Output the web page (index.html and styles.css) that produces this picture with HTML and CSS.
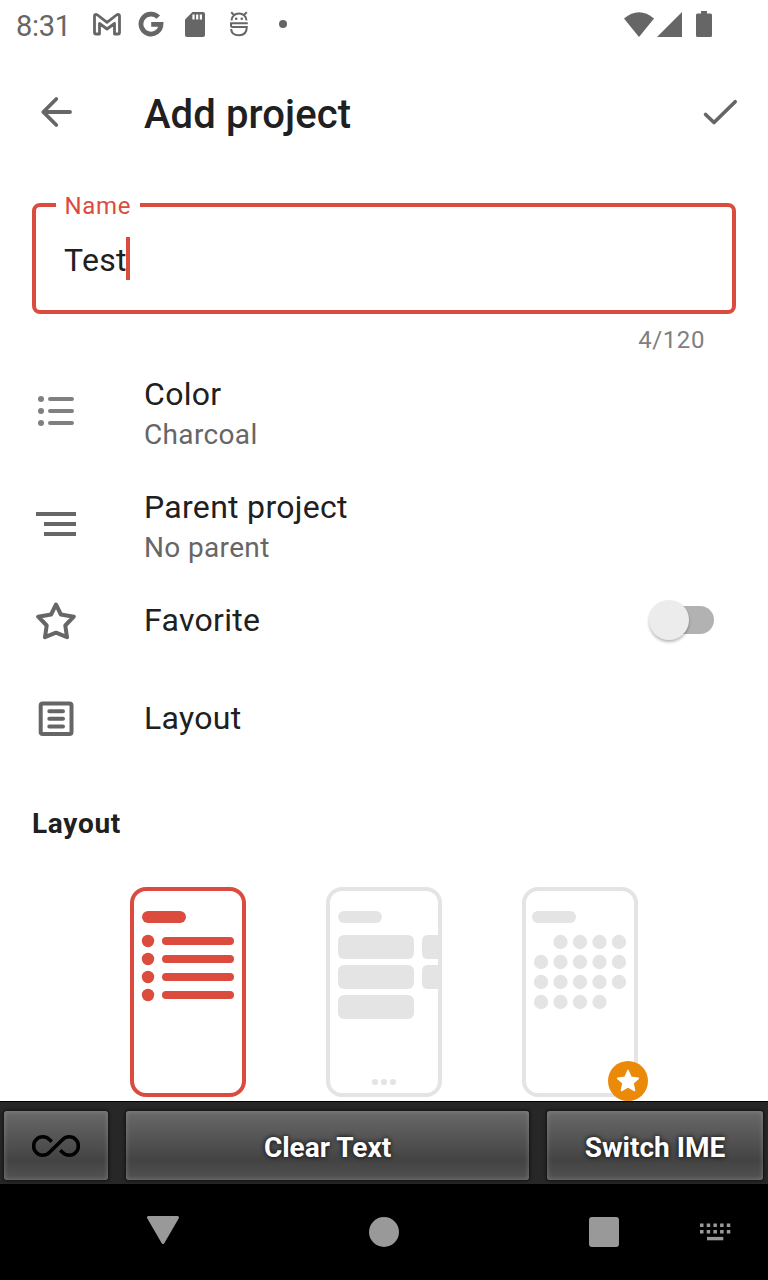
FILE: index.html
```html
<!DOCTYPE html>
<html lang="en">
<head>
<meta charset="utf-8">
<title>Add project</title>
<link rel="stylesheet" href="styles.css">
</head>
<body>
<div class="screen">
  <div class="status">
    <span class="clock">8:31</span>
    <svg class="s-mail" width="28" height="23" viewBox="0 0 28 23"><path d="M1.500 3.200Q1.500 1.500 3.300 1.500L4.500 2 14 9.300 23.500 2 24.700 1.500Q26.500 1.500 26.500 3.200V19.500Q26.500 21 25 21H21.500V10.500L14 16 6.500 10.500V21H3Q1.500 21 1.500 19.500Z" fill="none" stroke="#666" stroke-width="2.800" stroke-linejoin="round"/></svg>
    <svg class="s-g" width="26" height="26" viewBox="0 0 26 26"><path d="M20.300 6.200A10 10 0 1 0 23 13.300H13.200" fill="none" stroke="#666" stroke-width="4.800"/></svg>
    <svg class="s-sd" width="20" height="25" viewBox="0 0 20 25"><path d="M7.500 0H18Q20 0 20 2V23Q20 25 18 25H2Q0 25 0 23V7.500Z" fill="#666"/><path d="M8.500 2.500V7.500M12.200 2.500V7.500M15.900 2.500V7.500" stroke="#fff" stroke-width="2.200"/></svg>
    <svg class="s-bug" width="20" height="26" viewBox="0 0 20 26"><path d="M2.500 9.500A7.500 7 0 0 1 17.500 9.500M2.200 1.200L4.800 3.800M17.800 1.200L15.200 3.800M18.800 12.200H2V14.500Q2 16 3.600 16H17.800Q17.800 24.300 10 24.300 2.200 24.300 2.200 18" fill="none" stroke="#666" stroke-width="2"/><circle cx="7.200" cy="7.800" r="1.300" fill="#666"/><circle cx="12.800" cy="7.800" r="1.300" fill="#666"/></svg>
    <span class="s-dot"></span>
    <svg class="s-wifi" width="30" height="25" viewBox="0 0 30 25"><path d="M0 6.500Q15-6.200 30 6.500L15 25Z" fill="#666"/></svg>
    <svg class="s-cell" width="25" height="25" viewBox="0 0 25 25"><path d="M25 0V25H0Z" fill="#666"/></svg>
    <svg class="s-bat" width="16" height="26" viewBox="0 0 16 26"><path d="M5 0H11V2.500H14.500Q16 2.500 16 4V24.500Q16 26 14.500 26H1.500Q0 26 0 24.500V4Q0 2.500 1.500 2.500H5Z" fill="#666"/></svg>
  </div>

  <header class="appbar">
    <svg width="34" height="34" viewBox="0 0 34 34"><path d="M17.300 4L4.300 17 17.300 30M4.300 17H31" fill="none" stroke="#666" stroke-width="3.800" stroke-linecap="round" stroke-linejoin="round"/></svg>
    <h1 class="title">Add project</h1>
    <svg width="36" height="28" viewBox="0 0 36 28"><path d="M3.600 16.500L12 24.500 33.200 3.800" fill="none" stroke="#666" stroke-width="3.700" stroke-linecap="round" stroke-linejoin="round"/></svg>
  </header>

  <div class="field">
    <span class="label">Name</span>
    <span class="value">Test</span><span class="caret"></span>
  </div>
  <div class="counter">4/120</div>

  <div class="row">
    <svg class="icon" width="40" height="40" viewBox="0 0 40 40"><g fill="#808080"><circle cx="5" cy="8" r="3"/><circle cx="5" cy="20" r="3"/><circle cx="5" cy="32" r="3"/></g><path d="M14 8H36M14 20H36M14 32H36" stroke="#808080" stroke-width="4" stroke-linecap="round"/></svg>
    <div class="text"><div class="name">Color</div><div class="sub">Charcoal</div></div>
  </div>
  <div class="row parent">
    <svg class="icon" width="40" height="40" viewBox="0 0 40 40"><path d="M0 10H40M8 20H40M8 30H40" stroke="#666" stroke-width="4"/></svg>
    <div class="text"><div class="name">Parent project</div><div class="sub">No parent</div></div>
  </div>
  <div class="row favorite">
    <svg class="icon" width="40" height="40" viewBox="0 0 40 40"><path d="M20 3.500L24.900 13.500 37.800 15.700 29.300 24.500 31 36.200 20 31.700 9 36.200 10.700 24.500 2.200 15.700 15.100 13.500Z" fill="none" stroke="#666" stroke-width="4" stroke-linejoin="round"/></svg>
    <div class="name">Favorite</div>
    <div class="switch"><div class="thumb"></div></div>
  </div>
  <div class="row layout">
    <svg class="icon" width="40" height="40" viewBox="0 0 40 40"><rect x="4.700" y="4.500" width="30.800" height="30.600" rx="2" fill="none" stroke="#666" stroke-width="4"/><path d="M13.300 12.300H27M13.300 19.800H27M13.300 27.500H27" stroke="#666" stroke-width="4" stroke-linecap="round"/></svg>
    <div class="name">Layout</div>
  </div>

  <h2 class="section">Layout</h2>
  <div class="options">
    <div class="option">
      <svg width="116" height="210" viewBox="0 0 116 210"><rect x="2" y="2" width="112" height="206" rx="14" fill="none" stroke="#dc4c3e" stroke-width="4"/><g fill="#dc4c3e"><rect x="12" y="24" width="44" height="12" rx="6"/><circle cx="18" cy="54" r="6.200"/><circle cx="18" cy="72" r="6.200"/><circle cx="18" cy="90" r="6.200"/><circle cx="18" cy="108" r="6.200"/><rect x="32" y="50" width="72" height="8" rx="4"/><rect x="32" y="68" width="72" height="8" rx="4"/><rect x="32" y="86" width="72" height="8" rx="4"/><rect x="32" y="104" width="72" height="8" rx="4"/></g></svg>
    </div>
    <div class="option">
      <svg width="116" height="210" viewBox="0 0 116 210"><rect x="2" y="2" width="112" height="206" rx="14" fill="none" stroke="#e4e4e4" stroke-width="4"/><g fill="#e4e4e4"><rect x="12" y="24" width="44" height="12" rx="6"/><rect x="12" y="48" width="76" height="24" rx="6"/><rect x="12" y="78" width="76" height="24" rx="6"/><rect x="12" y="108" width="76" height="24" rx="6"/><path d="M114 48H102Q96 48 96 54V66Q96 72 102 72H114ZM114 78H102Q96 78 96 84V96Q96 102 102 102H114Z"/><circle cx="49" cy="195" r="3.100"/><circle cx="58" cy="195" r="3.100"/><circle cx="67" cy="195" r="3.100"/></g></svg>
    </div>
    <div class="option">
      <svg width="116" height="210" viewBox="0 0 116 210"><rect x="2" y="2" width="112" height="206" rx="14" fill="none" stroke="#e4e4e4" stroke-width="4"/><rect x="10" y="24" width="44" height="12" rx="6" fill="#e4e4e4"/><path d="M38.500 55h.01M58 55h.01M77.500 55h.01M97 55h.01M19 75h.01M38.500 75h.01M58 75h.01M77.500 75h.01M97 75h.01M19 95h.01M38.500 95h.01M58 95h.01M77.500 95h.01M97 95h.01M19 115h.01M38.500 115h.01M58 115h.01M77.500 115h.01" stroke="#e4e4e4" stroke-width="14.300" stroke-linecap="round"/></svg>
      <svg class="badge" width="40" height="40" viewBox="0 0 40 40"><circle cx="20" cy="20" r="20" fill="#eb8909"/><path d="M20 9.500L23 16.300 30.300 17.300 25 22.200 26.500 29.500 20 25.900 13.500 29.500 15 22.200 9.700 17.300 17 16.300Z" fill="#fff" stroke="#fff" stroke-width="1.600" stroke-linejoin="round"/></svg>
    </div>
  </div>

  <div class="ime">
    <div class="key key-icon"><svg width="48" height="22" viewBox="0 0 48 22"><path d="M19.800 6.700L17.300 4.500A9.200 9.200 0 1 0 17.300 17.500L30.700 4.500A9.200 9.200 0 1 1 30.700 17.500L28.200 15.300" fill="none" stroke="#000" stroke-width="3.600"/></svg></div>
    <div class="key">Clear Text</div>
    <div class="key">Switch IME</div>
  </div>
  <nav class="nav">
    <svg class="n-back" width="32" height="28" viewBox="0 0 32 28"><path d="M1.500 1.500H30.500L16 26.500Z" fill="#999" stroke="#999" stroke-width="3" stroke-linejoin="round"/></svg>
    <span class="n-home"></span>
    <span class="n-recent"></span>
    <svg class="n-kbd" width="31" height="18" viewBox="0 0 31 18"><path d="M0 2.300H31M0 8.800H31" stroke="#999" stroke-width="3.500" stroke-dasharray="3.500 3.200"/><path d="M7 15.600H23.300" stroke="#999" stroke-width="3.400"/></svg>
  </nav>
</div>
</body>
</html>
```
FILE: styles.css
```css
* { box-sizing: border-box; }
body { margin: 0; background: #fff; font-family: Roboto, "Liberation Sans", sans-serif; color: #202020; }
svg { display: block; flex: none; }
.screen { width: 768px; height: 1280px; overflow: hidden; display: flex; flex-direction: column; }
.screen > * { flex: none; }

.status { height: 48px; display: flex; align-items: center; padding-left: 16px; color: #666; }
.clock { width: 77px; font-size: 29px; line-height: 34px; margin-top: 3px; letter-spacing: -.3px; white-space: nowrap; }
.s-g { margin-left: 17px; }
.s-sd { margin-left: 21px; }
.s-bug { margin-left: 24px; }
.s-dot { width: 8px; height: 8px; border-radius: 50%; background: #666; margin-left: 30px; }
.s-wifi { margin-left: 337px; }
.s-cell { margin-left: 3px; }
.s-bat { margin-left: 14px; }

.appbar { height: 128px; display: flex; align-items: center; padding: 0 30px 0 39px; }
.title { flex: 1; margin: 5px 0 0 71px; font-size: 40px; font-weight: 500; line-height: 48px; letter-spacing: .1px; }

.field { position: relative; margin: 27px 32px 0; height: 111px; border: 4px solid #dc4c3e; border-radius: 8px; display: flex; align-items: center; padding-left: 28px; }
.label { position: absolute; left: 20px; top: -15px; padding: 0 8px 0 8.5px; background: #fff; color: #dc4c3e; font-size: 24px; line-height: 28px; width: 84px; letter-spacing: .7px; white-space: nowrap; }
.value { width: 64px; font-size: 32px; line-height: 38px; margin-top: 2px; letter-spacing: .35px; }
.caret { width: 4px; height: 43px; background: #dc4c3e; margin-left: -2px; }
.counter { height: 41px; padding: 12px 31px 0 0; margin-right: 32px; text-align: right; font-size: 24px; line-height: 28px; color: #808080; letter-spacing: .6px; }

.row { height: 113px; display: flex; align-items: flex-start; padding: 20px 54px 0 36px; }
.icon { margin: 16px 68px 0 0; }
.name { font-size: 32px; line-height: 38px; letter-spacing: .3px; }
.sub { font-size: 28px; line-height: 34px; margin-top: 5px; letter-spacing: .35px; color: #666; }
.favorite, .layout { align-items: center; padding-top: 0; padding-bottom: 0; }
.favorite .icon, .layout .icon { margin-top: 1px; }
.favorite { height: 78px; }
.layout { height: 118px; }
.switch { margin-left: auto; width: 60px; height: 28px; border-radius: 14px; background: #b2b2b2; display: flex; align-items: center; }
.thumb { width: 40px; height: 40px; flex: none; border-radius: 50%; background: #ececec; margin-left: -5px; box-shadow: 0 2px 3px rgba(0,0,0,.28); }

.section { margin: 30px 32px 0; height: 80px; font-size: 28px; line-height: 34px; font-weight: 700; letter-spacing: .7px; }
.options { display: flex; gap: 80px; padding-left: 130px; height: 214px; }
.option { position: relative; width: 116px; height: 210px; }
.badge { position: absolute; left: 86px; top: 174px; }

.ime { height: 83px; border-top: 1px solid #000; background: #272727; display: grid; grid-template-columns: 104px 403px 216px; gap: 18px; padding: 9px 5px 4px 4px; }
.key { display: flex; align-items: center; justify-content: center; padding-top: 4px; border-radius: 3px; background: linear-gradient(#696969, #434343 72%, #525252); box-shadow: inset 0 0 5px rgba(160,160,160,.55), 0 0 3px 1px #111; color: #fff; font-size: 28px; font-weight: 700; text-shadow: 0 0 5px #000; }
.key-icon { padding-top: 0; }

.nav { height: 96px; background: #000; display: flex; align-items: center; padding-left: 147px; }
.n-back { margin-top: -4px; }
.n-home { width: 30px; height: 30px; border-radius: 50%; background: #999; margin-left: 190px; }
.n-recent { width: 30px; height: 30px; border-radius: 3px; background: #999; margin-left: 190px; }
.n-kbd { margin-left: 81px; }
```
